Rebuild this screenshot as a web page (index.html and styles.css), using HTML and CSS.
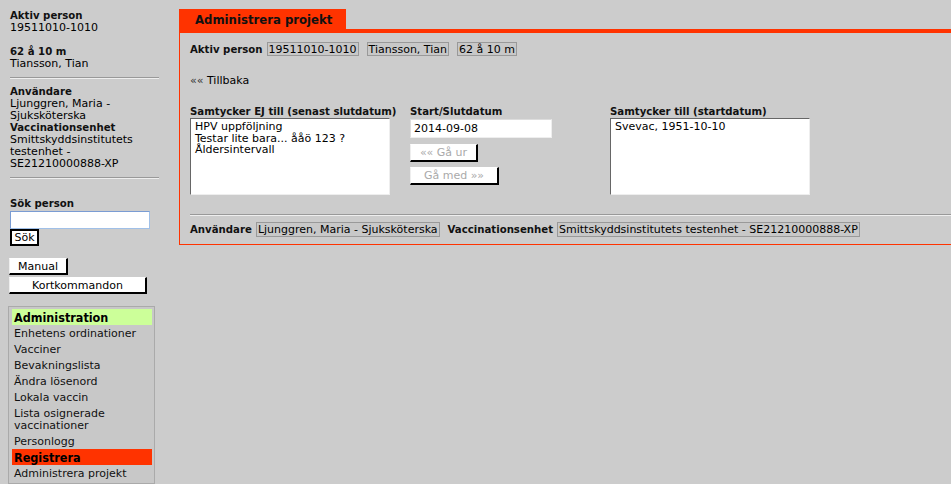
FILE: index.html
```html
<!DOCTYPE html>
<html lang="sv">
<head>
<meta charset="utf-8">
<title>Administrera projekt</title>
<link rel="stylesheet" href="styles.css">
</head>
<body>
<div class="page">
  <aside class="sidebar">
    <div class="info">
      <b>Aktiv person</b><br>19511010-1010<br><br>
      <b>62 å 10 m</b><br>Tiansson, Tian
    </div>
    <hr class="side-hr">
    <div class="info">
      <b>Användare</b><br>Ljunggren, Maria -<br>Sjuksköterska<br>
      <b>Vaccinationsenhet</b><br>Smittskyddsinstitutets<br>testenhet -<br>SE21210000888-XP
    </div>
    <hr class="side-hr">
    <div class="search">
      <b>Sök person</b>
      <input class="search-input" type="text">
      <button class="btn btn-sok">Sök</button>
    </div>
    <div class="side-buttons">
      <button class="btn btn-manual">Manual</button>
      <button class="btn btn-kort">Kortkommandon</button>
    </div>
    <nav class="menu">
      <div class="menu-head green">Administration</div>
      <a class="menu-item">Enhetens ordinationer</a>
      <a class="menu-item">Vacciner</a>
      <a class="menu-item">Bevakningslista</a>
      <a class="menu-item">Ändra lösenord</a>
      <a class="menu-item">Lokala vaccin</a>
      <a class="menu-item">Lista osignerade vaccinationer</a>
      <a class="menu-item">Personlogg</a>
      <div class="menu-head red">Registrera</div>
      <a class="menu-item">Administrera projekt</a>
    </nav>
  </aside>
  <main class="main">
    <div class="tab">Administrera projekt</div>
    <div class="tab-bar"></div>
    <div class="panel">
      <div class="active-row">
        <b>Aktiv person</b>
        <span class="val">19511010-1010</span>
        <span class="val">Tiansson, Tian</span>
        <span class="val">62 å 10 m</span>
      </div>
      <div class="back"><span class="arr">««</span> Tillbaka</div>
      <div class="columns">
        <div class="col col-ej">
          <b class="lbl">Samtycker EJ till (senast slutdatum)</b>
          <div class="list">HPV uppföljning<br>Testar lite bara... ååö 123 ?<br>Åldersintervall</div>
        </div>
        <div class="col col-mid">
          <b class="lbl">Start/Slutdatum</b>
          <input class="date-input" type="text" value="2014-09-08">
          <button class="btn btn-act btn-ur">«« Gå ur</button>
          <button class="btn btn-act btn-med">Gå med »»</button>
        </div>
        <div class="col col-till">
          <b class="lbl">Samtycker till (startdatum)</b>
          <div class="list">Svevac, 1951-10-10</div>
        </div>
      </div>
      <hr class="main-hr">
      <div class="footer-row">
        <b>Användare</b>
        <span class="fval">Ljunggren, Maria - Sjuksköterska</span>
        <b class="f2">Vaccinationsenhet</b>
        <span class="fval">Smittskyddsinstitutets testenhet - SE21210000888-XP</span>
      </div>
    </div>
  </main>
</div>
</body>
</html>
```
FILE: styles.css
```css
html, body {
  margin: 0;
  padding: 0;
  background: #cccccc;
  font-family: "DejaVu Sans", Verdana, sans-serif;
  font-size: 11px;
  color: #000;
}
b {
  font-family: "DejaVu Sans Condensed", "DejaVu Sans", sans-serif;
  font-weight: bold;
  font-size: 11.3px;
  color: #111;
}
.page {
  display: flex;
  align-items: flex-start;
}
.sidebar {
  width: 169px;
  flex: none;
  padding: 10px 0 0 10px;
  box-sizing: border-box;
  line-height: 12px;
}
.info { width: 150px; }
.side-hr {
  width: 149px;
  margin: 7px 0 7px 0;
  border: 0;
  border-top: 1px solid #999;
  border-bottom: 1px solid #eee;
  height: 0;
}
.search {
  margin-top: 19px;
  display: flex;
  flex-direction: column;
  align-items: flex-start;
}
.search-input {
  margin: 1px 0 0 0;
  width: 140px;
  height: 18px;
  box-sizing: border-box;
  border: 1px solid;
  border-color: #7a9cd3 #a0c0e8 #a0c0e8 #7a9cd3;
  background: #fff;
  padding: 0 2px;
  font: 11px "DejaVu Sans", sans-serif;
}
.btn {
  background: #fff;
  font: 11px "DejaVu Sans", sans-serif;
  color: #000;
  padding: 0;
  box-sizing: border-box;
  border-style: solid;
  border-width: 1px 2px 2px 1px;
  border-color: #fff #000 #000 #eee;
  text-align: center;
  white-space: nowrap;
}
.btn-sok {
  margin-top: 0;
  width: 29px;
  height: 17px;
  border-color: #000;
  border-width: 2px;
}
.side-buttons {
  margin-top: 12px;
  display: flex;
  flex-direction: column;
  align-items: flex-start;
  margin-left: -1px;
}
.btn-manual { width: 59px; height: 17px; }
.btn-kort { width: 138px; height: 17px; margin-top: 2px; }
.menu {
  margin: 12px 0 0 -2px;
  width: 147px;
  box-sizing: border-box;
  border: 1px solid #aaa;
  background: #c8c8c8;
  padding: 2px 2px 2px 3px;
  display: flex;
  flex-direction: column;
  line-height: 12px;
}
.menu-head {
  font-family: "DejaVu Sans Condensed", "DejaVu Sans", sans-serif;
  font-weight: bold;
  font-size: 12.5px;
  height: 16px;
  line-height: 17px;
  padding-left: 2px;
}
.menu-head.green { background: #ccff99; }
.menu-head.red { background: #ff3300; }
.menu-item {
  display: block;
  padding: 3px 0 1px 2px;
  color: #111;
}
.main {
  flex: 1;
  margin-top: 9px;
  margin-left: 10px;
  min-width: 0;
}
.tab {
  display: block;
  background: #ff3300;
  font-family: "DejaVu Sans Condensed", "DejaVu Sans", sans-serif;
  font-weight: bold;
  font-size: 13px;
  height: 20px;
  line-height: 21px;
  padding: 0 0 0 16px;
  width: 167px;
  box-sizing: border-box;
  white-space: nowrap;
  color: #111;
}
.tab-bar {
  height: 4px;
  background: #ff3300;
}
.panel {
  border-left: 1px solid #ff3300;
  border-bottom: 1px solid #ff3300;
  padding: 9px 0 7px 10px;
}
.active-row {
  display: flex;
  align-items: center;
  height: 14px;
}
.active-row b { margin-right: 4px; }
.val {
  border: 1px solid #999;
  background: #c8c8c8;
  height: 14px;
  line-height: 13px;
  padding: 0 1px;
  box-sizing: border-box;
  margin-right: 8px;
}
.back {
  margin-top: 18px;
  line-height: 13px;
}
.back .arr { color: #333; }
.columns {
  margin-top: 19px;
  display: flex;
  align-items: flex-start;
}
.col {
  display: flex;
  flex-direction: column;
  align-items: flex-start;
}
.lbl { line-height: 12px; height: 12px; white-space: nowrap; }
.col-ej { width: 220px; }
.col-mid { width: 200px; }
.list {
  width: 200px;
  height: 77px;
  box-sizing: border-box;
  background: #fff;
  border: 1px solid;
  border-color: #666 #eee #eee #666;
  padding: 2px 4px;
  line-height: 11.5px;
}
.date-input {
  margin: 1px 0 0 0;
  width: 142px;
  height: 19px;
  box-sizing: border-box;
  border: 1px solid;
  border-color: #ddd #eee #eee #ddd;
  background: #fff;
  padding: 0 3px;
  font: 11px "DejaVu Sans", sans-serif;
}
.btn-act { color: #aaa; height: 18px; }
.btn-ur { width: 68px; margin-top: 6px; }
.btn-med { width: 89px; margin-top: 5px; }
.main-hr {
  margin: 19px 0 0 0;
  border: 0;
  border-top: 1px solid #999;
  border-bottom: 1px solid #eee;
  height: 0;
}
.footer-row {
  margin-top: 6px;
  display: flex;
  align-items: center;
  height: 15px;
}
.footer-row b { margin-right: 4px; }
.footer-row .f2 { margin-left: 8px; }
.fval {
  border: 1px solid #999;
  background: #c8c8c8;
  height: 15px;
  line-height: 13px;
  padding: 0 1px;
  box-sizing: border-box;
}
```
